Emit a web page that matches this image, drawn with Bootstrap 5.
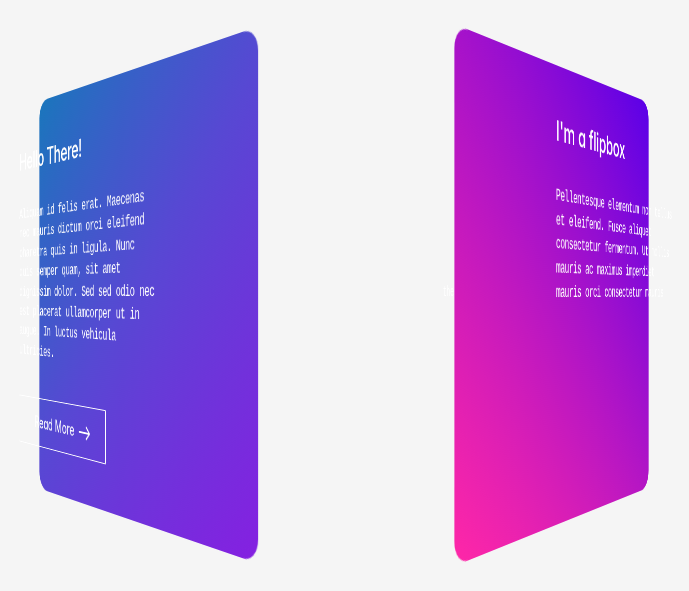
<!DOCTYPE html>
<html lang="en">
<head>
<meta charset="utf-8">
<meta name="viewport" content="width=device-width, initial-scale=1">
<title>Flip boxes</title>
<link href="https://cdn.jsdelivr.net/npm/bootstrap@5.3.0/dist/css/bootstrap.min.css" rel="stylesheet">
<style>
body{background:#f5f5f5;font-family:Inter,"Liberation Sans",sans-serif}
.stage{width:689px;height:591px}
.boxes{gap:49px;margin-left:-63px;padding-top:70px}
.flip{width:388px;height:450px;perspective:1000px}
.face{border-radius:20px;transform-style:preserve-3d}
.face-blue{background:linear-gradient(135deg,#1a76bc,#5748d3 50%,#8520e1);transform:rotateY(-56.7deg)}
.face-pink{background:linear-gradient(45deg,#ff27a7,#5a00e8);transform:rotateY(60.9deg)}
.inner{transform:translateZ(50px) scale(.9);padding:48px 0 0 31px}
.face-pink .inner{padding-left:70px}
.heading{font-size:27px;line-height:34px;font-weight:500;letter-spacing:-.6px;font-feature-settings:"cv11"}
.face-pink .heading{letter-spacing:-.35px}
.copy{font:15.8px/23.4px "Liberation Mono",monospace;letter-spacing:-.72px;margin:35px 0 42px}
.face-pink .copy{line-height:23.7px;letter-spacing:-.82px}
.more{width:200px;height:57px;border:1px solid #fff;border-right-width:2px;border-left:0;border-radius:2px;font-size:18.4px;font-feature-settings:"cv11";padding-left:40px;gap:10px;letter-spacing:-.2px}
.ghost{left:443px;top:284px;font:14px/16px "Liberation Mono",monospace;transform:scaleX(.43);transform-origin:0 0}
</style>
</head>
<body>
<main class="stage position-relative overflow-hidden">
<div class="boxes d-flex">
<section class="flip flex-shrink-0">
<div class="face face-blue w-100 h-100">
<div class="inner w-100 h-100 text-white text-nowrap">
<h2 class="heading mb-0">Hello There!</h2>
<p class="copy">Aliquam id felis erat. Maecenas<br>nec mauris dictum orci eleifend<br>pharetra quis in ligula. Nunc<br>quis semper quam, sit amet<br>dignissim dolor. Sed sed odio nec<br>est placerat ullamcorper ut in<br>augue. In luctus vehicula<br>ultricies.</p>
<a href="#" class="more d-flex align-items-center text-white text-decoration-none">Read More
<svg width="25" height="18" viewBox="0 0 25 18" fill="none" stroke="currentColor" stroke-width="1.8" stroke-linecap="round" stroke-linejoin="round"><path d="M1 9h22M16 2.5 23 9l-7 6.5"/></svg></a>
</div>
</div>
</section>
<section class="flip flex-shrink-0">
<div class="face face-pink w-100 h-100">
<div class="inner w-100 h-100 text-white text-nowrap">
<h2 class="heading mb-0">I'm a flipbox</h2>
<p class="copy">Pellentesque elementum non tellus<br>et eleifend. Fusce aliquet<br>consectetur fermentum. Ut mollis<br>mauris ac maximus imperdiet<br>mauris orci consectetur mauris</p>
</div>
</div>
</section>
</div>
<span class="ghost position-absolute text-white">the</span>
</main>
<script src="https://cdn.jsdelivr.net/npm/bootstrap@5.3.0/dist/js/bootstrap.bundle.min.js"></script>
</body>
</html>
